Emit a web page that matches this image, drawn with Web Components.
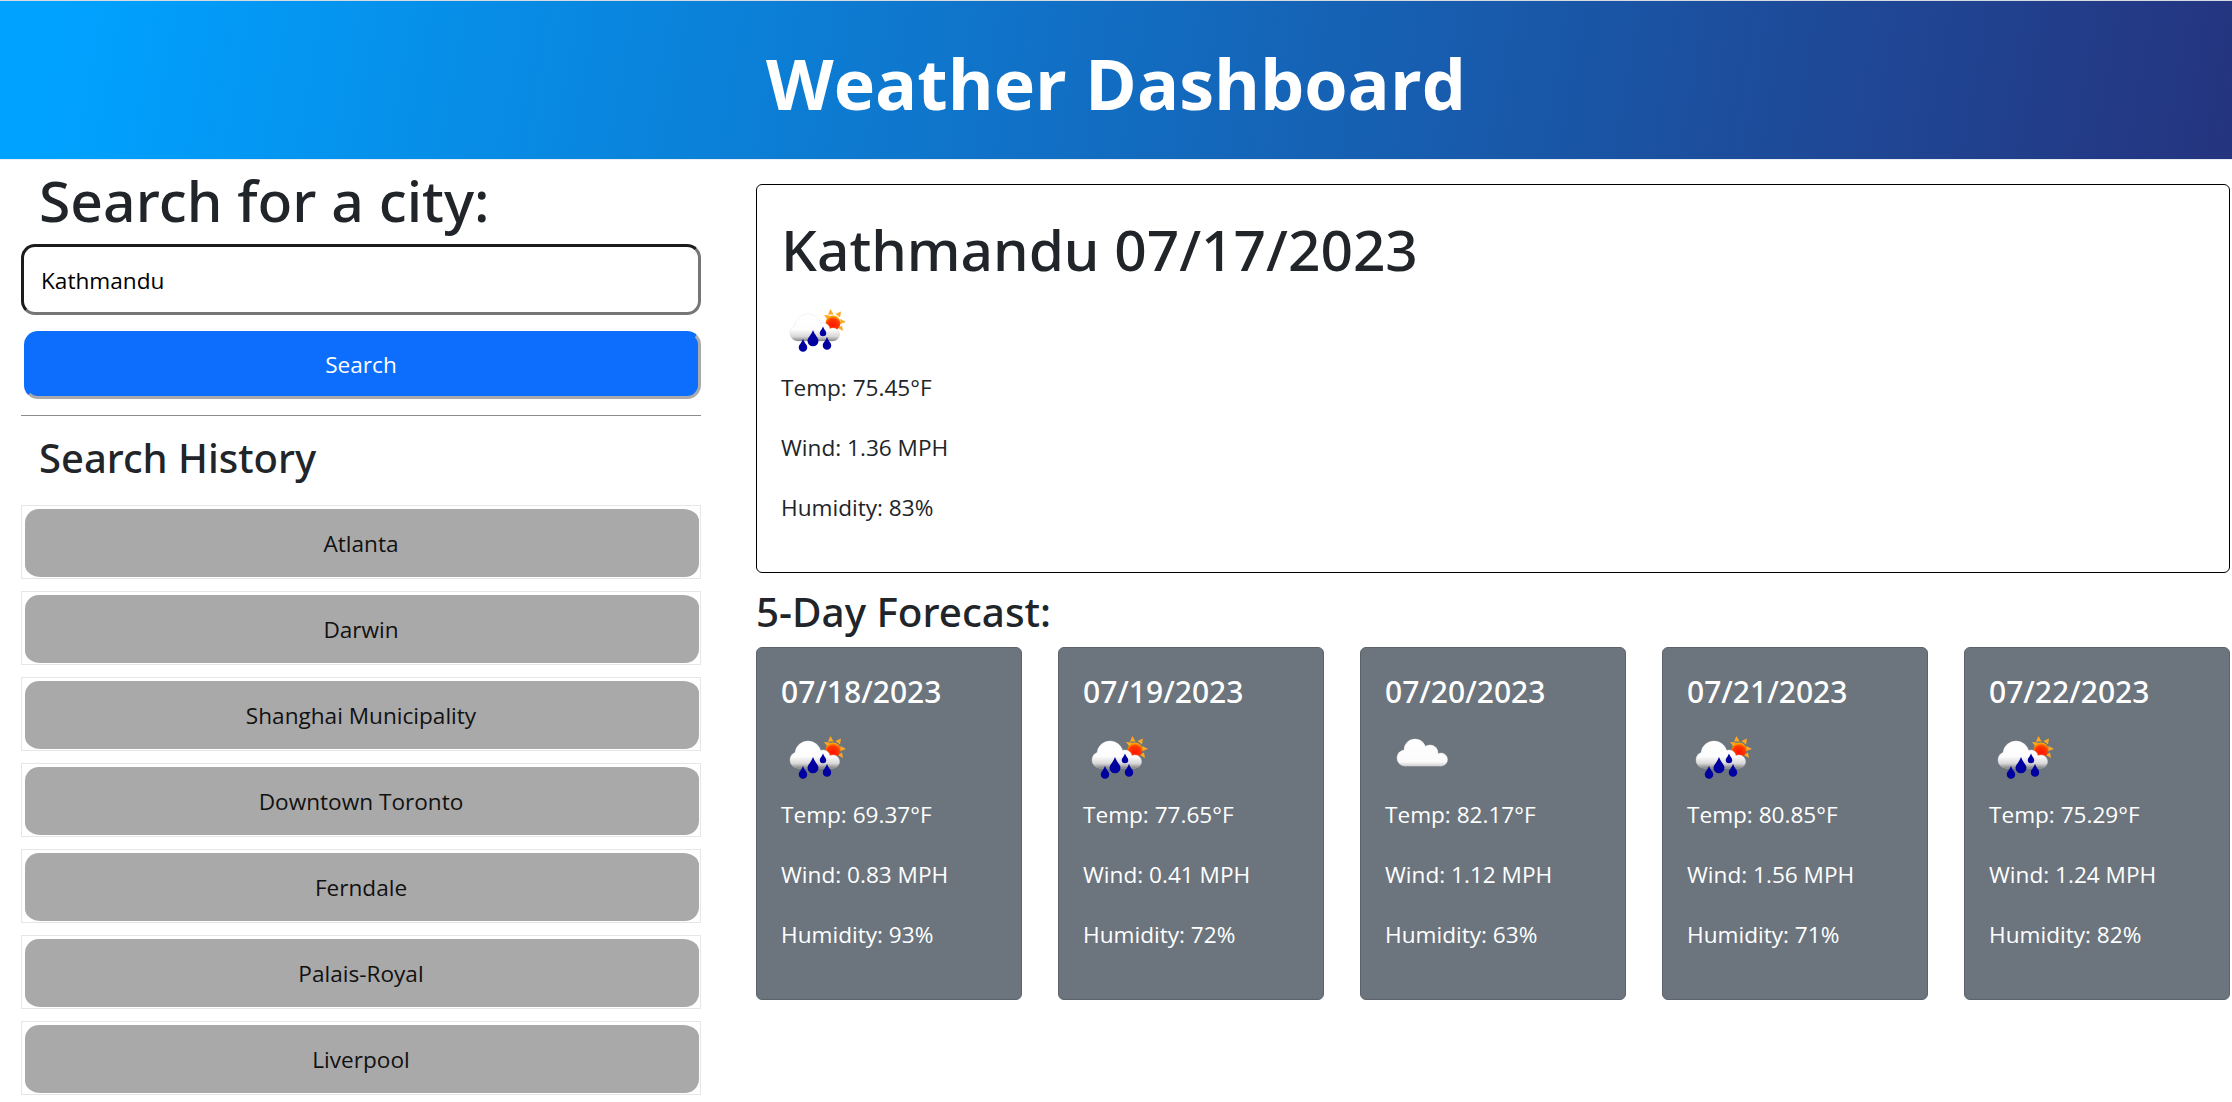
<!DOCTYPE html>
<html>
<head>
<meta charset="utf-8">
<title>Weather Dashboard</title>
<style>
    * { box-sizing: border-box; }
    html, body { margin: 0; padding: 0; }
    body {
        background: #fff;
        color: #212529;
        font-family: "Open Sans", "Noto Sans", sans-serif;
        font-size: 22.6px;
        line-height: 36px;
        overflow: hidden;
        height: 1102px;
    }
    .page {
        display: grid;
        grid-template-columns: 756px 1fr;
    }
</style>
</head>
<body>
<template id="weather-icon-tpl">
    <style>
        :host { display: block; width: 75px; height: 75px; }
        svg { display: block; width: 75px; height: 75px; overflow: visible; }
    </style>
    <svg viewBox="0 0 75 75" aria-hidden="true"></svg>
</template>

<weather-header>Weather Dashboard</weather-header>
<div class="page">
    <search-panel>
        <history-item>Atlanta</history-item>
        <history-item>Darwin</history-item>
        <history-item>Shanghai Municipality</history-item>
        <history-item>Downtown Toronto</history-item>
        <history-item>Ferndale</history-item>
        <history-item>Palais-Royal</history-item>
        <history-item>Liverpool</history-item>
    </search-panel>
    <forecast-panel>
        <current-weather slot="current" city="Kathmandu 07/17/2023" temp="75.45" wind="1.36" humidity="83"></current-weather>
        <forecast-card date="07/18/2023" temp="69.37" wind="0.83" humidity="93" icon="rain"></forecast-card>
        <forecast-card date="07/19/2023" temp="77.65" wind="0.41" humidity="72" icon="rain"></forecast-card>
        <forecast-card date="07/20/2023" temp="82.17" wind="1.12" humidity="63" icon="cloud"></forecast-card>
        <forecast-card date="07/21/2023" temp="80.85" wind="1.56" humidity="71" icon="rain"></forecast-card>
        <forecast-card date="07/22/2023" temp="75.29" wind="1.24" humidity="82" icon="rain"></forecast-card>
    </forecast-panel>
</div>

<script>
let iconCount = 0;

class WeatherIcon extends HTMLElement {
    constructor() {
        super();
        this.shadowDOM = this.attachShadow({mode: "open"});
    }

    // circles and a box that overlap into one cloud, with a soft rim under the white fill
    cloud(parts, fill) {
        const shapes = parts.map(p => p.length === 3
            ? `<circle cx="${p[0]}" cy="${p[1]}" r="${p[2]}"/>`
            : `<rect x="${p[0]}" y="${p[1]}" width="${p[2]}" height="${p[3]}"/>`).join("");
        return `
            <g fill="#cfcfcf" stroke="#cfcfcf" stroke-width="1" opacity=".55">${shapes}</g>
            <g fill="${fill}">${shapes}</g>`;
    }

    drop(x, y, w, h) {
        return `<path d="M${x} ${y - h * .6}C${x - w * .15} ${y - h * .25} ${x - w / 2} ${y - h * .1} ${x - w / 2} ${y + h * .12}A${w / 2} ${w / 2} 0 0 0 ${x + w / 2} ${y + h * .12}C${x + w / 2} ${y - h * .1} ${x + w * .15} ${y - h * .25} ${x} ${y - h * .6}Z" fill="#0000a0"/>`;
    }

    connectedCallback() {
        const id = "i" + (iconCount++);
        const defs = `
            <defs>
                <linearGradient id="${id}r" gradientUnits="userSpaceOnUse" x1="0" y1="19" x2="0" y2="47">
                    <stop offset="0" stop-color="#ffffff"/>
                    <stop offset=".55" stop-color="#fdfdfd"/>
                    <stop offset=".8" stop-color="#d8d8d8"/>
                    <stop offset="1" stop-color="#777777"/>
                </linearGradient>
                <linearGradient id="${id}c" gradientUnits="userSpaceOnUse" x1="0" y1="17" x2="0" y2="46">
                    <stop offset="0" stop-color="#ffffff"/>
                    <stop offset=".78" stop-color="#fbfbfb"/>
                    <stop offset=".92" stop-color="#d5d5d5"/>
                    <stop offset="1" stop-color="#8b8b8b"/>
                </linearGradient>
                <radialGradient id="${id}s" cx=".5" cy=".65" r=".6">
                    <stop offset="0" stop-color="#ff1500"/>
                    <stop offset=".7" stop-color="#ff3a00"/>
                    <stop offset="1" stop-color="#ffa800"/>
                </radialGradient>
                <filter id="${id}b" x="-10%" y="-10%" width="120%" height="120%">
                    <feGaussianBlur stdDeviation=".35"/>
                </filter>
            </defs>`;
        const rain = `
            <g fill="#ffa824">
                <path d="M43 20l6 .5-2.500 4z"/>
                <path d="M49.500 14l3 5.500h-5.500z"/>
                <path d="M60 16.500l-1 6-4.500-3.500z"/>
                <path d="M65 27l-6 2 .5-5z"/>
                <path d="M62 36l-5-3 4-2.500z"/>
            </g>
            <circle cx="52" cy="28" r="7.500" fill="url(#${id}s)"/>
            ${this.cloud([[17, 38, 8], [27, 32, 13], [42, 35, 7], [52, 39.500, 6.500], [17, 34, 35, 12]], `url(#${id}r)`)}
            ${this.drop(32, 44, 11, 15)}${this.drop(22, 51, 8.500, 12)}${this.drop(46, 49, 8.500, 12)}${this.drop(42, 37, 6.500, 9)}`;
        const cloud = this.cloud([[20, 36, 8], [30, 28, 11], [45, 31, 8], [56, 37.500, 6.500], [20, 32, 36, 12]], `url(#${id}c)`);
        const body = this.getAttribute("type") === "cloud" ? cloud : rain;
        this.shadowDOM.appendChild(document.getElementById("weather-icon-tpl").content.cloneNode(true));
        this.shadowDOM.querySelector("svg").innerHTML = `${defs}<g filter="url(#${id}b)">${body}</g>`;
    }
}

class WeatherHeader extends HTMLElement {
    constructor() {
        super();
        this.shadowDOM = this.attachShadow({mode: "open"});
        this.shadowDOM.innerHTML = `
        <style>
            :host {
                display: flex;
                align-items: center;
                justify-content: center;
                height: 160px;
                padding-top: 5px;
                border-top: 1px solid #d5dbe0;
                border-bottom: 1px solid #e9eef2;
                background: linear-gradient(100deg, #00a2ff 3%, #25347f 100%);
                color: #fff;
            }
            h1 {
                margin: 0;
                font-size: 70px;
                line-height: 1.2;
                font-weight: 700;
            }
        </style>
        <h1><slot></slot></h1>`;
    }
}

class HistoryItem extends HTMLElement {
    constructor() {
        super();
        this.shadowDOM = this.attachShadow({mode: "open"});
        this.shadowDOM.innerHTML = `
        <style>
            :host {
                display: block;
                border: 1px solid #e6e6e6;
                padding: 3px 1px 1px 3px;
            }
            button {
                display: block;
                width: 100%;
                height: 68px;
                padding: 2px 2px 0 0;
                border: 0;
                border-radius: 14px 16px 14px 16px / 14px 12px 14px 12px;
                background: #a9a9a9;
                color: #111;
                font: inherit;
            }
        </style>
        <button><slot></slot></button>`;
    }
}

class SearchPanel extends HTMLElement {
    constructor() {
        super();
        this.shadowDOM = this.attachShadow({mode: "open"});
        this.shadowDOM.innerHTML = `
        <style>
            * { box-sizing: border-box; }
            :host {
                display: block;
                padding: 0 55px 0 21px;
            }
            h1 {
                margin: 0;
                padding: 4px 0 0 18px;
                font-family: "Noto Sans", "Open Sans", sans-serif;
                font-size: 57px;
                font-weight: 500;
                line-height: 72px;
            }
            input {
                display: block;
                width: 100%;
                height: 71px;
                margin-top: 8px;
                padding: 2px 17px 0;
                border: 3px solid;
                border-color: #1c1c1c #767676 #767676 #1c1c1c;
                border-radius: 14px;
                color: #000;
                font: inherit;
                outline: none;
            }
            .search {
                display: block;
                width: 677px;
                height: 68px;
                margin: 16px 0 0 3px;
                padding: 0 3px 0 0;
                border: 3px solid #0d6efd;
                border-right-color: #aaa;
                border-bottom-color: #aaa;
                border-radius: 14px;
                background: #0d6efd;
                color: #fff;
                font: inherit;
            }
            hr {
                margin: 16px 0 0;
                border: 0;
                border-top: 1.5px solid #8a8c8e;
            }
            h3 {
                margin: 0;
                padding: 17px 0 0 18px;
                font-family: "Noto Sans", "Open Sans", sans-serif;
                font-size: 40px;
                font-weight: 500;
                line-height: 50px;
            }
            .history {
                display: flex;
                flex-direction: column;
                gap: 12px;
                margin-top: 22px;
            }
            ::slotted(history-item) { flex: none; }
        </style>
        <h1>Search for a city:</h1>
        <input type="text" value="Kathmandu">
        <button class="search">Search</button>
        <hr>
        <h3>Search History</h3>
        <div class="history"><slot></slot></div>`;
    }
}

class CurrentWeather extends HTMLElement {
    constructor() {
        super();
        this.shadowDOM = this.attachShadow({mode: "open"});
    }

    connectedCallback() {
        this.shadowDOM.innerHTML = `
        <style>
            :host {
                display: block;
                height: 389px;
                padding: 24px;
                border: 1.5px solid #000;
                border-radius: 6px;
            }
            h1 {
                margin: 0 0 10px;
                padding-top: 4px;
                font-family: "Noto Sans", "Open Sans", sans-serif;
                font-size: 56.800px;
                font-weight: 500;
                line-height: 72px;
            }
            p { margin: 0 0 24px; }
        </style>
        <h1>${this.getAttribute("city")}</h1>
        <weather-icon type="rain"></weather-icon>
        <p>Temp: ${this.getAttribute("temp")}°F</p>
        <p>Wind: ${this.getAttribute("wind")} MPH</p>
        <p>Humidity: ${this.getAttribute("humidity")}%</p>`;
    }
}

class ForecastCard extends HTMLElement {
    constructor() {
        super();
        this.shadowDOM = this.attachShadow({mode: "open"});
    }

    connectedCallback() {
        this.shadowDOM.innerHTML = `
        <style>
            :host {
                display: block;
                height: 353px;
                padding: 24px;
                border: 1.5px solid #5c636a;
                border-radius: 6px;
                background: #6c757d;
                color: #fff;
            }
            h5 {
                margin: 0 0 12px;
                padding-top: 2px;
                font-family: "Noto Sans", "Open Sans", sans-serif;
                font-size: 30px;
                font-weight: 500;
                line-height: 36px;
            }
            p { margin: 0 0 24px; }
        </style>
        <h5>${this.getAttribute("date")}</h5>
        <weather-icon type="${this.getAttribute("icon")}"></weather-icon>
        <p>Temp: ${this.getAttribute("temp")}°F</p>
        <p>Wind: ${this.getAttribute("wind")} MPH</p>
        <p>Humidity: ${this.getAttribute("humidity")}%</p>`;
    }
}

class ForecastPanel extends HTMLElement {
    constructor() {
        super();
        this.shadowDOM = this.attachShadow({mode: "open"});
        this.shadowDOM.innerHTML = `
        <style>
            :host {
                display: block;
                padding: 24px 2px 0 0;
            }
            h3 {
                margin: 0;
                padding-top: 14px;
                font-family: "Noto Sans", "Open Sans", sans-serif;
                font-size: 40.400px;
                font-weight: 500;
                line-height: 50px;
            }
            .cards {
                display: grid;
                grid-template-columns: repeat(5, 266px);
                justify-content: space-between;
                margin-top: 10px;
            }
        </style>
        <slot name="current"></slot>
        <h3>5-Day Forecast:</h3>
        <div class="cards"><slot></slot></div>`;
    }
}

customElements.define("weather-icon", WeatherIcon);
customElements.define("weather-header", WeatherHeader);
customElements.define("history-item", HistoryItem);
customElements.define("search-panel", SearchPanel);
customElements.define("current-weather", CurrentWeather);
customElements.define("forecast-card", ForecastCard);
customElements.define("forecast-panel", ForecastPanel);
</script>
</body>
</html>
